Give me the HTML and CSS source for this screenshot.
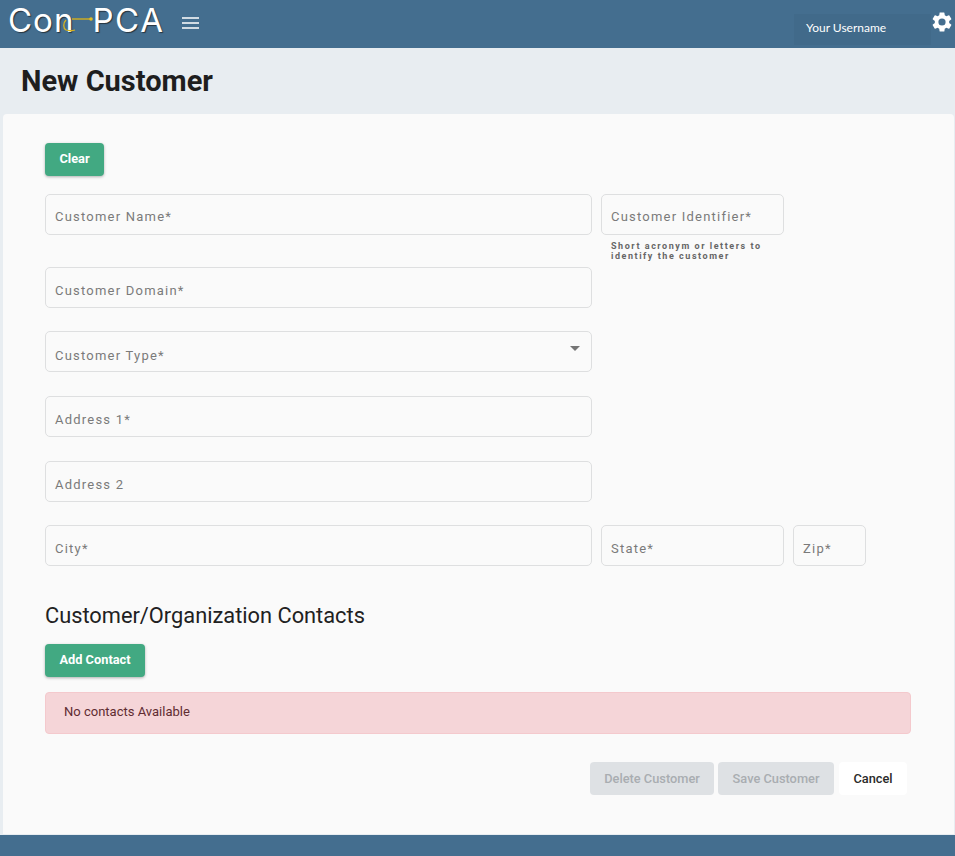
FILE: index.html
```html
<!DOCTYPE html>
<html lang="en">

<head>
    <meta charset="UTF-8">
    <meta name="viewport" content="width=device-width, initial-scale=1.0">
    <title>New Customer</title>
    <link rel="stylesheet" href="styles.css">
</head>

<body>
    <header class="topbar">
        <div class="logo">
            <span class="logo-text">Con</span>
            <svg class="logo-link" width="18" height="32" viewBox="0 0 18 32">
                <path d="M-2 13H17" stroke="#c9ab24" stroke-width="1.5" fill="none"/>
                <circle cx="17" cy="13" r="1.8" fill="#e0bd22"/>
                <path d="M-8 14c-3 3-3 8 0 10 3 1 6 1 9 0" stroke="#d9b51f" stroke-width="1.3" fill="none"/>
            </svg>
            <span class="logo-text logo-text-wide">PCA</span>
        </div>
        <svg class="menu-icon" width="17" height="12" viewBox="0 0 17 12">
            <path d="M0 1H17M0 6H17M0 11H17" stroke="#fff" stroke-width="1.6" fill="none"/>
        </svg>
        <div class="user-box">Your Username</div>
        <svg class="gear" width="24" height="24" viewBox="0 0 24 24">
            <path fill="#fff" d="M19.14 12.94c.04-.3.06-.61.06-.94 0-.32-.02-.64-.07-.94l2.03-1.58a.49.49 0 0 0 .12-.61l-1.92-3.32a.49.49 0 0 0-.59-.22l-2.39.96c-.5-.38-1.03-.7-1.62-.94l-.36-2.54a.48.48 0 0 0-.48-.41h-3.84c-.24 0-.43.17-.47.41l-.36 2.54c-.59.24-1.13.57-1.62.94l-2.39-.96a.48.48 0 0 0-.59.22L2.74 8.87c-.12.21-.08.47.12.61l2.03 1.58c-.05.3-.09.63-.09.94s.02.64.07.94l-2.03 1.58a.49.49 0 0 0-.12.61l1.92 3.32c.12.22.37.29.59.22l2.39-.96c.5.38 1.03.7 1.62.94l.36 2.54c.05.24.24.41.48.41h3.84c.24 0 .44-.17.47-.41l.36-2.54c.59-.24 1.13-.56 1.62-.94l2.39.96c.22.08.47 0 .59-.22l1.92-3.32c.12-.22.07-.47-.12-.61l-2.01-1.58zM12 15.6A3.6 3.6 0 1 1 12 8.4a3.6 3.6 0 0 1 0 7.2z"/>
        </svg>
    </header>

    <div class="title-band">
        <h1>New Customer</h1>
    </div>

    <main class="card">
        <button class="btn btn-green btn-clear">Clear</button>

        <div class="form-grid">
            <div class="field field-top">Customer Name*</div>
            <div class="id-cell">
                <div class="field field-id">Customer Identifier*</div>
                <div class="hint">Short acronym or letters to identify the customer</div>
            </div>

            <div class="field field-short new-row">Customer Domain*</div>

            <div class="field field-select new-row">
                Customer Type*
                <span class="arrow"></span>
            </div>

            <div class="field new-row">Address 1*</div>
            <div class="field field-short new-row">Address 2</div>

            <div class="field new-row">City*</div>
            <div class="field">State*</div>
            <div class="field">Zip*</div>
        </div>

        <h2>Customer/Organization Contacts</h2>
        <button class="btn btn-green btn-add">Add Contact</button>
        <div class="alert">No contacts Available</div>

        <div class="actions">
            <button class="btn btn-disabled btn-delete">Delete Customer</button>
            <button class="btn btn-disabled btn-save">Save Customer</button>
            <button class="btn btn-cancel">Cancel</button>
        </div>
    </main>

    <footer class="bottombar"></footer>
</body>

</html>
```

FILE: styles.css
```css
* {
    box-sizing: border-box;
}

body {
    margin: 0;
    height: 856px;
    overflow: hidden;
    display: flex;
    flex-direction: column;
    font-family: Roboto, Arial, sans-serif;
    background-color: #e8edf1;
    color: #212121;
}

.topbar {
    height: 48px;
    flex: none;
    display: flex;
    align-items: center;
    background-color: #446e8f;
}

.logo {
    display: flex;
    align-items: center;
    margin-left: 8px;
    width: 174px;
    height: 48px;
}

.logo-text {
    font-family: Inter, Arial, sans-serif;
    font-size: 33px;
    font-weight: 400;
    line-height: 1;
    letter-spacing: 1px;
    color: #fff;
    margin-top: -8px;
    text-shadow: 1px 1px 1px #26343f;
}

.logo-text-wide {
    letter-spacing: 1.6px;
}

.logo-link {
    flex: none;
    margin: -4px 0 0 0;
    overflow: visible;
}

.menu-icon {
    flex: none;
    margin: -3px 0 0 0;
}

.user-box {
    align-self: flex-start;
    width: 137px;
    height: 31px;
    margin: 14px 0 0 auto;
    padding: 6px 0 0 12px;
    font-family: Lato, Arial, sans-serif;
    font-size: 12px;
    line-height: 16px;
    color: #fff;
    background-color: #416a8a;
}

.gear {
    flex: none;
    margin: -4px 1px 0 -1px;
}

.title-band {
    height: 66px;
    flex: none;
    padding: 16px 0 0 21px;
}

h1 {
    margin: 0;
    font-size: 29px;
    line-height: 34px;
    font-weight: 700;
    color: #1e1e1e;
}

.card {
    flex: 1;
    margin: 0 1px 1px 3px;
    padding: 29px 0 0 42px;
    background-color: #fafafa;
    border-radius: 4px 4px 0 0;
}

.btn {
    display: block;
    border: none;
    border-radius: 4px;
    font-family: Roboto, Arial, sans-serif;
    font-size: 12.8px;
    font-weight: 500;
}

.btn-green {
    height: 33px;
    padding: 0 0 3px;
    font-weight: 700;
    color: #fff;
    background-color: #42a982;
    box-shadow: 0 1px 3px rgba(0, 0, 0, 0.3);
}

.btn-clear {
    width: 59px;
}

.btn-add {
    width: 100px;
    margin-top: 14px;
}

.form-grid {
    display: grid;
    grid-template-columns: 547px 183px 73px;
    column-gap: 9px;
    margin-top: 18px;
}

.new-row {
    grid-column: 1;
}

.id-cell {
    grid-column: 2;
}

.field {
    position: relative;
    height: 41px;
    margin-bottom: 24px;
    padding: 15px 0 0 9px;
    background-color: #fafafa;
    border: 1px solid #dedfe0;
    border-radius: 5px;
    font-size: 13px;
    line-height: 16px;
    letter-spacing: 1.22px;
    color: #7a7a7a;
    white-space: nowrap;
}

.field-top {
    margin-bottom: 32px;
    padding-top: 14px;
}

.field-id {
    margin-bottom: 0;
    padding-top: 14px;
}

.field-short {
    margin-bottom: 23px;
}

.field-select {
    padding-top: 16px;
}

.hint {
    margin: 6px 0 0 10px;
    width: 165px;
    font-size: 9px;
    line-height: 10px;
    font-weight: 700;
    letter-spacing: 1.55px;
    color: #666;
}

.arrow {
    position: absolute;
    right: 11px;
    top: 14px;
    border-left: 5px solid transparent;
    border-right: 5px solid transparent;
    border-top: 5px solid #757575;
}

h2 {
    margin: 12px 0 0;
    font-size: 21.8px;
    line-height: 28px;
    font-weight: 400;
    color: #212121;
}

.alert {
    width: 866px;
    height: 42px;
    margin-top: 15px;
    padding: 11px 0 0 18px;
    font-size: 13px;
    line-height: 16px;
    color: #5f2c31;
    background-color: #f5d5d8;
    border: 1px solid #f4c9cd;
    border-radius: 4px;
}

.actions {
    display: flex;
    gap: 4px;
    margin-top: 28px;
    margin-left: 545px;
}

.actions .btn {
    height: 33px;
    padding: 0;
}

.actions .btn-delete {
    width: 124px;
}

.actions .btn-save {
    width: 116px;
}

.btn-disabled {
    color: #a9adb1;
    background-color: #dee1e4;
}

.actions .btn-cancel {
    width: 68px;
    margin-left: 1px;
    color: #2a2a2a;
    background-color: #fff;
}

.bottombar {
    height: 21px;
    flex: none;
    background-color: #446e8f;
}
```
